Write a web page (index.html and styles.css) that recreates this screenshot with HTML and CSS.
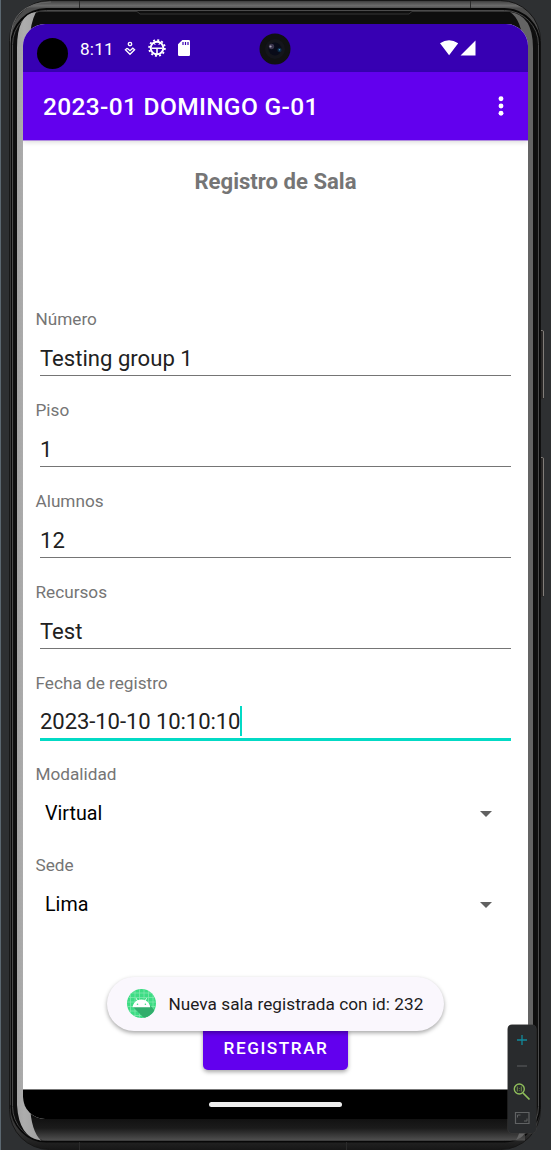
FILE: index.html
```html
<!DOCTYPE html>
<html lang="es">
<head>
<meta charset="utf-8">
<title>Registro de Sala</title>
<link rel="stylesheet" href="styles.css">
</head>
<body>
<div class="emulator">
  <svg class="frame" width="551" height="1150" viewBox="0 0 551 1150" aria-hidden="true">
    <defs>
      <linearGradient id="metal" gradientUnits="userSpaceOnUse" x1="0" y1="0" x2="0" y2="1150">
        <stop offset="0" stop-color="#222"/><stop offset=".0015" stop-color="#484848"/><stop offset=".005" stop-color="#6c6c6c"/><stop offset=".0072" stop-color="#4c4c4c"/><stop offset=".06" stop-color="#4a4a4a"/><stop offset=".98" stop-color="#383838"/><stop offset="1" stop-color="#161616"/>
      </linearGradient>
      <linearGradient id="chin" x1="0" y1="0" x2="0" y2="1">
        <stop offset="0" stop-color="#111"/><stop offset=".45" stop-color="#1b1b1b"/><stop offset="1" stop-color="#505050"/>
      </linearGradient>
      <linearGradient id="glass" x1="0" y1="0" x2="1" y2="0">
        <stop offset="0" stop-color="#a4a4a4"/><stop offset=".3" stop-color="#adadad"/><stop offset="1" stop-color="#a0a0a0"/>
      </linearGradient>
    </defs>
    <rect width="551" height="1150" fill="#2e3032"/>
    <rect width="1" height="1150" fill="#5b6770"/>
    <path d="M541 330h1q2 0 2 2v65q0 2-2 2h-1zM541 457h1q2 0 2 2v136q0 2-2 2h-1z" fill="#2a2827"/>
    <path d="M541 330.500h1.500q1 0 1 1.500v66M541 457.500h1.500q1 0 1 1.500v137" fill="none" stroke="#817d79"/>
    <rect x="9.500" y="0.500" width="531" height="1149" rx="40" fill="url(#metal)" stroke="#171717"/>
    <path d="M10.500 1105V40Q11 3 51 2" fill="none" stroke="#666"/>
    <rect x="11.500" y="9" width="528" height="1132.500" rx="35" fill="#101010" stroke="#080808" stroke-width="2"/>
    <rect x="12.500" y="10.500" width="526" height="1130" rx="34" fill="none" stroke="#4b4b4b"/>
    <rect x="14" y="12" width="522" height="1128.500" rx="32" fill="#0e0e0e"/>
    <path d="M25 1118H525V1140.500H46Q30 1140 25 1118z" fill="url(#chin)"/>
    <path d="M36 12Q17 14 17 48V1105Q19 1138 41 1140.500Q31 1131 30 1105V45Q29 26 36 12z" fill="url(#glass)"/>
    <path d="M510 12Q533 15 533 48V1100Q532 1135 516 1140Q522 1131 523 1105V45Q522 20 510 12z" fill="#646464"/>
    <path d="M79.500 1v7M470.500 1v7M79.500 1142v8M346.500 1142v8" stroke="#2a2a2a"/>
    <path d="M36 11.500H137L140 14H409L412 11.500H510" fill="none" stroke="#343434"/>
  </svg>

  <main class="screen">
    <header class="status">
      <span class="punch"></span>
      <span class="clock">8:11</span>
      <svg class="st-care" width="12" height="15" viewBox="0 0 12 15" fill="none" stroke="#fff" stroke-width="1.300"><circle cx="6" cy="3" r="1.700"/><path d="M3.200 7.200L1.400 8.800L6 13.300L10.600 8.800L8.800 7.200L6 9.700L3.200 7.200"/></svg>
      <svg class="st-gear" width="18" height="18" viewBox="0 0 18 18" fill="none" stroke="#fff"><circle cx="9" cy="9" r="6.300" stroke-width="1.900"/><circle cx="9" cy="9" r="7.900" stroke-width="1.800" stroke-dasharray="2 2.136"/><path d="M3.500 9.300h11M9 9.500v5.500" stroke-width="1.600"/><path d="M5.800 3.800L7.300 6M12.200 3.800L10.700 6" stroke-width="1"/></svg>
      <svg class="st-sd" width="12" height="16" viewBox="0 0 12 16"><path d="M4.300 0H10.700Q12 0 12 1.300V14.700Q12 16 10.700 16H1.300Q0 16 0 14.700V4.300z" fill="#fff"/><path d="M5 2v3M7.500 2v3M10 2v3" stroke="#3700b3" stroke-width="1.200"/></svg>
      <svg class="camera" width="32" height="32" viewBox="0 0 32 32"><circle cx="16" cy="16" r="15.500" fill="#101112"/><circle cx="16" cy="16" r="10" fill="#14151b"/><circle cx="16" cy="16" r="6.500" fill="#090b19"/><circle cx="12.500" cy="13.500" r="2.700" fill="#39334b"/><circle cx="11.500" cy="13.500" r="1.100" fill="#a9a4b4"/><circle cx="20.500" cy="17" r="2.200" fill="#0e2944"/><circle cx="20.500" cy="16.800" r=".8" fill="#398dbf"/></svg>
      <svg class="st-net" width="37" height="16" viewBox="0 0 37 16" fill="#fff"><path d="M0 3.300Q9 -2.900 18.200 3.300L9.100 15.200zM35.500 .5V15.500H20.500z"/></svg>
    </header>
    <div class="appbar">
      <h1 class="app-title">2023-01 DOMINGO G-01</h1>
      <svg width="6" height="22" viewBox="0 0 6 22" fill="#fff"><circle cx="3" cy="3.700" r="2.450"/><circle cx="3" cy="11" r="2.450"/><circle cx="3" cy="18.300" r="2.450"/></svg>
    </div>
    <section class="content">
      <h2 class="heading">Registro de Sala</h2>
      <div class="form">
        <div class="field"><div class="label">Número</div><div class="input">Testing group 1</div></div>
        <div class="field"><div class="label">Piso</div><div class="input">1</div></div>
        <div class="field"><div class="label">Alumnos</div><div class="input">12</div></div>
        <div class="field"><div class="label">Recursos</div><div class="input">Test</div></div>
        <div class="field"><div class="label">Fecha de registro</div><div class="input focused">2023-10-10 10:10:10<span class="caret"></span></div></div>
        <div class="field"><div class="label">Modalidad</div><div class="select">Virtual<span class="arrow"></span></div></div>
        <div class="field"><div class="label">Sede</div><div class="select">Lima<span class="arrow"></span></div></div>
      </div>
      <div class="button">REGISTRAR</div>
    </section>
    <footer class="navbar"><span class="handle"></span></footer>
  </main>

  <div class="toast">
    <svg width="29" height="29" viewBox="0 0 29 29"><defs><clipPath id="disc"><circle cx="14.500" cy="14.500" r="14.500"/></clipPath></defs><g clip-path="url(#disc)"><path d="M0 0h29v29H0z" fill="#3ddc84"/><path d="M3.500 0v29M8 0v29M12.500 0v29M17 0v29M21.500 0v29M26 0v29M0 4h29M0 8.500h29M0 13h29M0 17.500h29M0 22h29M0 26.500h29" stroke="#86e9b2" stroke-width=".7"/><path d="M6 18L17 29H29V23L21 14L23 18z" fill="#31ad6c"/><path d="M5.500 18.300Q6.300 13.700 10 11.600L8.700 9.400L9.300 9L10.700 11.300Q14.300 9.900 18 11.300L19.400 9L20 9.400L18.700 11.600Q22.500 13.700 23.300 18.300z" fill="#fff"/><circle cx="10.500" cy="15.300" r=".8" fill="#3ddc84"/><circle cx="18.400" cy="15.300" r=".8" fill="#3ddc84"/></g></svg>
    <span class="toast-text">Nueva sala registrada con id: 232</span>
  </div>

  <div class="zoombar">
    <svg width="28" height="108" viewBox="0 0 28 108" fill="none"><path d="M9 15H19M14 10V20" stroke="#118a9c" stroke-width="1.300"/><path d="M9 41H19" stroke="#4d4f50" stroke-width="1.500"/><circle cx="11.300" cy="64" r="5" stroke="#8fbe5b" stroke-width="1.400"/><path d="M15 68L21.500 74.500" stroke="#8fbe5b" stroke-width="1.700"/><path d="M9.300 61.500v5M13.300 61.500v5M11.300 63v.8M11.300 65.300v.8" stroke="#719447"/><path d="M7.500 87.500H21V98.500H7.500z" stroke="#606263" stroke-width="1.200"/><path d="M9.500 92.500V90H12.500M16 96H19V93.500" stroke="#606263"/></svg>
  </div>
</div>
</body>
</html>
```
FILE: styles.css
```css
* { box-sizing: border-box; }
body { margin: 0; background: #2e3032; font-family: Roboto, sans-serif; }
.emulator { position: relative; width: 551px; height: 1150px; padding: 24px 23px 31px; overflow: hidden; }
.frame { position: absolute; inset: 0; }
.screen { position: relative; display: flex; flex-direction: column; width: 505px; height: 1095px; background: #fff; border-radius: 22px; overflow: hidden; }
.status { position: relative; display: flex; align-items: center; height: 48px; flex: none; padding-left: 14px; background: #3700b3; color: #fff; }
.punch { width: 31px; height: 31px; margin-top: 10px; border-radius: 50%; background: #000; }
.clock { margin-left: 12px; width: 35px; font-size: 17.200px; letter-spacing: .2px; white-space: nowrap; padding-top: 1px; }
.st-care { margin-left: 9px; }
.st-gear { margin-left: 12px; }
.st-sd { margin-left: 12px; }
.camera { position: absolute; left: 236px; top: 9px; }
.st-net { margin-left: auto; margin-right: 51px; }
.appbar { position: relative; z-index: 1; display: flex; justify-content: space-between; align-items: center; flex: none; height: 68px; padding: 0 24px 0 20px; background: #6200ee; color: #fff; box-shadow: 0 1px 0 #b18be0, 0 2px 5px rgba(0,0,0,.16); }
.app-title { margin: 0; font-size: 24.500px; font-weight: 500; letter-spacing: .33px; white-space: nowrap; }
.content { display: flex; flex-direction: column; flex: 1; }
.heading { margin: 27px 0 0; height: 28px; line-height: 28px; text-align: center; font-size: 22.100px; font-weight: 700; color: #757575; }
.form { margin-top: 110px; padding: 0 17px 0 12.500px; }
.field { height: 91px; }
.label { height: 28px; line-height: 28px; font-size: 17.200px; color: #757575; }
.input { display: flex; align-items: center; height: 43px; margin-left: 4.500px; padding-top: 8px; border-bottom: 1.400px solid #757575; font-size: 22.100px; color: #212121; }
.input.focused { height: 44px; padding-top: 7px; border-bottom: 3px solid #03dac5; letter-spacing: -.1px; }
.caret { width: 2px; height: 30px; background: #03dac5; }
.select { display: flex; justify-content: space-between; align-items: center; height: 50px; padding: 1px 19px 0 9.500px; font-size: 19.700px; color: #000; }
.arrow { border: 6px solid transparent; border-top-color: #616161; border-bottom: 0; }
.button { display: flex; justify-content: center; align-items: center; width: 145px; height: 44px; margin: 84px 0 0 180px; padding-left: 1px; border-radius: 5px; background: #6200ee; color: #fff; font-size: 17.200px; font-weight: 500; letter-spacing: 1.550px; box-shadow: 0 2px 4px rgba(0,0,0,.35); }
.navbar { display: flex; justify-content: center; align-items: center; flex: none; height: 30px; border-top: 1px solid #777; background: #000; }
.handle { width: 133px; height: 5px; border-radius: 3px; background: #eee; }
.toast { position: absolute; left: 107px; top: 976.500px; display: flex; align-items: center; gap: 12.500px; width: 337px; height: 54px; padding-left: 20px; border-radius: 27px; background: #faf7fd; color: #1d1b20; font-size: 17.200px; white-space: nowrap; box-shadow: 0 2px 4px rgba(0,0,0,.35); }
.toast-text { letter-spacing: .04px; padding-top: 1px; }
.zoombar { position: absolute; left: 508px; top: 1025px; width: 28px; height: 108px; border-radius: 4px; background: #292b2d; box-shadow: 0 0 0 .5px #3b3b3b; }
```
